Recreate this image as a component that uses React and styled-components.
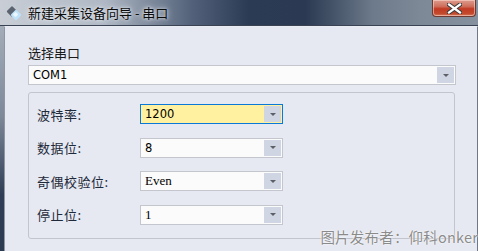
import React from "react";
import styled, { createGlobalStyle } from "styled-components";

const Global = createGlobalStyle`
  html, body {
    margin: 0;
    padding: 0;
    overflow: hidden;
    background: #2c3b53;
  }
`;

const Window = styled.div`
  position: relative;
  width: 478px;
  height: 251px;
  display: flex;
  flex-direction: column;
  overflow: hidden;
  font-family: "Noto Sans CJK SC", "Liberation Sans", sans-serif;
`;

const TitleBar = styled.div`
  height: 25px;
  display: flex;
  align-items: flex-start;
  background: linear-gradient(
    to right,
    #c9ced6 0%,
    #aeb7c3 22%,
    #53627a 40%,
    #2c3b54 52%,
    #2b3a52 64%,
    #6d7a8b 78%,
    #7e8997 88%,
    #8691a0 100%
  );
  border-bottom: 1px solid #3a4353;
`;

const AppIcon = styled.svg`
  margin: 6px 0 0 5px;
  flex: none;
`;

const Title = styled.div`
  margin: 4px 0 0 6px;
  font-size: 13px;
  line-height: 17px;
  color: #0b0b0b;
  text-shadow: 0 0 6px #e8ecf2, 0 0 3px #e8ecf2;
  flex: 1;
`;

const CloseButton = styled.div`
  width: 44px;
  height: 17px;
  margin-right: 2px;
  display: flex;
  align-items: center;
  justify-content: center;
  border: 1px solid #6b3a33;
  border-top: none;
  border-radius: 0 0 4px 4px;
  box-shadow: inset 0 0 0 1px rgba(255, 220, 210, 0.55);
  background: linear-gradient(
    to bottom,
    #dd9c8e 0%,
    #cf6f5c 40%,
    #c13a22 55%,
    #c44a2e 85%,
    #d47a5e 100%
  );
  box-sizing: border-box;
`;

const Body = styled.div`
  flex: 1;
  display: flex;
  min-height: 0;
`;

const SideFrame = styled.div`
  width: 4px;
  flex: none;
  background: linear-gradient(to bottom, #a3adb9 0%, #7d8899 40%, #2f3e56 75%, #2c3a52 100%);
`;

const Content = styled.div`
  flex: 1;
  background: #e6e9f2;
  border-left: 1px solid #8e96a3;
  border-top: 1px solid #e9ecf3;
  border-right: 1px solid #6e7888;
  padding: 17px 20px 0 23px;
  display: flex;
  flex-direction: column;
  box-sizing: border-box;
`;

const SectionLabel = styled.div`
  font-size: 13px;
  line-height: 17px;
  color: #1a1a1a;
  margin-bottom: 4px;
`;

const Select = styled.div`
  width: ${(p) => p.$width || "143px"};
  height: 20px;
  box-sizing: border-box;
  display: flex;
  align-items: stretch;
  border: 1px solid ${(p) => (p.$focused ? "#0a78d7" : "#c3c6cc")};
  background: ${(p) => (p.$focused ? "#fff1a0" : "#fbfbfb")};
  padding: 1px;
`;

const Value = styled.div`
  flex: 1;
  display: flex;
  align-items: center;
  padding-left: 3px;
  font-family: ${(p) =>
    p.$serif ? '"Liberation Serif", "DejaVu Serif", serif' : '"DejaVu Sans", "Liberation Sans", sans-serif'};
  font-size: ${(p) => (p.$serif ? "13px" : "11.5px")};
  color: #000;
`;

const DropButton = styled.div`
  width: 17px;
  background: #cfd5e3;
  display: flex;
  align-items: center;
  justify-content: center;
  &::after {
    content: "";
    width: 0;
    height: 0;
    border-left: 3px solid transparent;
    border-right: 3px solid transparent;
    border-top: 3px solid #5c5f66;
  }
`;

const Group = styled.div`
  margin-top: 7px;
  width: 427px;
  height: 147px;
  box-sizing: border-box;
  border: 1px solid #c2c5cc;
  border-radius: 3px;
  padding: 11px 0 0 8px;
  display: flex;
  flex-direction: column;
  gap: 13.5px;
`;

const Row = styled.div`
  display: flex;
  align-items: center;
  height: 20px;
`;

const FieldLabel = styled.div`
  width: 103px;
  font-size: 13px;
  color: #1e2a3a;
  letter-spacing: 0.5px;
`;

const Watermark = styled.div`
  position: absolute;
  right: 0;
  bottom: 5px;
  font-size: 14.5px;
  line-height: 18px;
  color: #8b8b8b;
  text-shadow: 0 0 2px #ffffff, 0 0 1px #ffffff;
  letter-spacing: 0.2px;
`;

const fields = [
  { label: "波特率:", value: "1200", focused: true },
  { label: "数据位:", value: "8" },
  { label: "奇偶校验位:", value: "Even", serif: true },
  { label: "停止位:", value: "1", serif: true },
];

const Combo = ({ value, focused, serif, width }) => (
  <Select $focused={focused} $width={width}>
    <Value $serif={serif}>{value}</Value>
    <DropButton />
  </Select>
);

export default function App() {
  return (
    <>
      <Global />
      <Window>
        <TitleBar>
          <AppIcon width="17" height="15" viewBox="0 0 17 15">
            <rect x="3" y="1.5" width="8" height="8" rx="1.5" fill="#5b6270" transform="rotate(45 7 5.5)" />
            <rect x="7" y="5" width="8" height="8" rx="1.5" fill="#bfe2fb" transform="rotate(45 11 9)" />
            <rect x="8.5" y="6.5" width="4" height="4" rx="1" fill="#eaf6ff" transform="rotate(45 10.5 8.5)" />
          </AppIcon>
          <Title>新建采集设备向导 - 串口</Title>
          <CloseButton>
            <svg width="15" height="11" viewBox="0 0 15 11">
              <path
                d="M2 1.5 L13 9.5 M13 1.5 L2 9.5"
                stroke="#3a3a3a"
                strokeWidth="4.2"
                strokeLinecap="square"
              />
              <path
                d="M2 1.5 L13 9.5 M13 1.5 L2 9.5"
                stroke="#ffffff"
                strokeWidth="2.2"
                strokeLinecap="square"
              />
            </svg>
          </CloseButton>
        </TitleBar>
        <Body>
          <SideFrame />
          <Content>
            <SectionLabel>选择串口</SectionLabel>
            <Combo value="COM1" width="428px" />
            <Group>
              {fields.map((f) => (
                <Row key={f.label}>
                  <FieldLabel>{f.label}</FieldLabel>
                  <Combo value={f.value} focused={f.focused} serif={f.serif} />
                </Row>
              ))}
            </Group>
          </Content>
        </Body>
        <Watermark>图片发布者：仰科onker</Watermark>
      </Window>
    </>
  );
}
